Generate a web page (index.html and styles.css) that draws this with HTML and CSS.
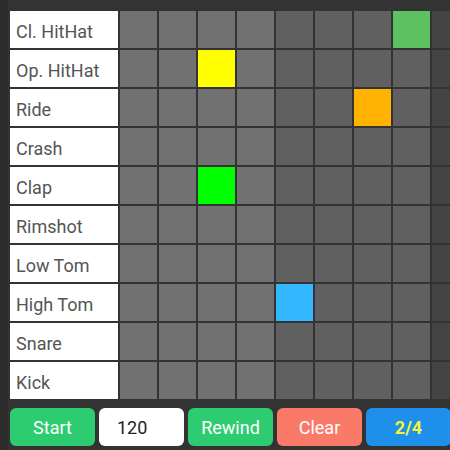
FILE: index.html
```html
<!DOCTYPE html>
<html>
<head>
<meta charset="utf-8">
<link rel="stylesheet" href="styles.css">
</head>
<body>
<div class="app">
  <div class="grid">
    <div class="row"><div class="label">Cl. HitHat</div><div class="cell a"></div><div class="cell a"></div><div class="cell a"></div><div class="cell a"></div><div class="cell b"></div><div class="cell b"></div><div class="cell b"></div><div class="cell on-green"></div><div class="cell c"></div><div class="cell c"></div></div>
    <div class="row"><div class="label">Op. HitHat</div><div class="cell a"></div><div class="cell a"></div><div class="cell on-yellow"></div><div class="cell a"></div><div class="cell b"></div><div class="cell b"></div><div class="cell b"></div><div class="cell b"></div><div class="cell c"></div><div class="cell c"></div></div>
    <div class="row"><div class="label">Ride</div><div class="cell a"></div><div class="cell a"></div><div class="cell a"></div><div class="cell a"></div><div class="cell b"></div><div class="cell b"></div><div class="cell on-orange"></div><div class="cell b"></div><div class="cell c"></div><div class="cell c"></div></div>
    <div class="row"><div class="label">Crash</div><div class="cell a"></div><div class="cell a"></div><div class="cell a"></div><div class="cell a"></div><div class="cell b"></div><div class="cell b"></div><div class="cell b"></div><div class="cell b"></div><div class="cell c"></div><div class="cell c"></div></div>
    <div class="row"><div class="label">Clap</div><div class="cell a"></div><div class="cell a"></div><div class="cell on-lime"></div><div class="cell a"></div><div class="cell b"></div><div class="cell b"></div><div class="cell b"></div><div class="cell b"></div><div class="cell c"></div><div class="cell c"></div></div>
    <div class="row"><div class="label">Rimshot</div><div class="cell a"></div><div class="cell a"></div><div class="cell a"></div><div class="cell a"></div><div class="cell b"></div><div class="cell b"></div><div class="cell b"></div><div class="cell b"></div><div class="cell c"></div><div class="cell c"></div></div>
    <div class="row"><div class="label">Low Tom</div><div class="cell a"></div><div class="cell a"></div><div class="cell a"></div><div class="cell a"></div><div class="cell b"></div><div class="cell b"></div><div class="cell b"></div><div class="cell b"></div><div class="cell c"></div><div class="cell c"></div></div>
    <div class="row"><div class="label">High Tom</div><div class="cell a"></div><div class="cell a"></div><div class="cell a"></div><div class="cell a"></div><div class="cell on-blue"></div><div class="cell b"></div><div class="cell b"></div><div class="cell b"></div><div class="cell c"></div><div class="cell c"></div></div>
    <div class="row"><div class="label">Snare</div><div class="cell a"></div><div class="cell a"></div><div class="cell a"></div><div class="cell a"></div><div class="cell b"></div><div class="cell b"></div><div class="cell b"></div><div class="cell b"></div><div class="cell c"></div><div class="cell c"></div></div>
    <div class="row"><div class="label">Kick</div><div class="cell a"></div><div class="cell a"></div><div class="cell a"></div><div class="cell a"></div><div class="cell b"></div><div class="cell b"></div><div class="cell b"></div><div class="cell b"></div><div class="cell c"></div><div class="cell c"></div></div>
  </div>
  <div class="controls">
    <button class="btn green">Start</button>
    <input class="tempo" type="text" value="120">
    <button class="btn green">Rewind</button>
    <button class="btn red">Clear</button>
    <button class="btn blue sig">2/4</button>
  </div>
</div>
</body>
</html>
```
FILE: styles.css
```css
html, body {
  margin: 0;
  padding: 0;
  background: #2b2b2b;
  width: 450px;
  height: 450px;
  overflow: hidden;
}
.app {
  margin-left: 8px;
  background: #333333;
  height: 450px;
  padding: 11px 0 0 2px;
  box-sizing: border-box;
  font-family: Roboto, "Liberation Sans", sans-serif;
  overflow: hidden;
}
.grid {
  display: flex;
  flex-direction: column;
  gap: 2px;
}
.row {
  display: flex;
  gap: 2px;
}
.label {
  flex: 0 0 auto;
  width: 108px;
  height: 37px;
  box-sizing: border-box;
  padding: 3px 0 0 6px;
  background: #ffffff;
  color: #555555;
  font-size: 18px;
  display: flex;
  align-items: center;
}
.cell {
  flex: 0 0 auto;
  width: 37px;
  height: 37px;
}
.a { background: #717171; }
.b { background: #606060; }
.c { background: #444444; }
.on-green { background: #5dc061; }
.on-yellow { background: #ffff00; }
.on-orange { background: #ffb300; }
.on-lime { background: #00ff00; }
.on-blue { background: #33b8ff; }
.controls {
  display: flex;
  gap: 4px;
  margin-top: 9px;
}
.btn, .tempo {
  flex: 0 0 auto;
  width: 85px;
  height: 38px;
  border: none;
  border-radius: 6px;
  font-family: Roboto, "Liberation Sans", sans-serif;
  font-size: 18px;
  box-sizing: border-box;
  padding: 0;
}
.btn { color: #ffffff; }
.green { background: #2ecc71; }
.red { background: #fa7a6a; }
.blue { background: #1e8fea; }
.sig { color: #f2f53a; font-weight: bold; }
.tempo {
  background: #ffffff;
  color: #222222;
  padding-left: 18px;
  outline: none;
}
```
